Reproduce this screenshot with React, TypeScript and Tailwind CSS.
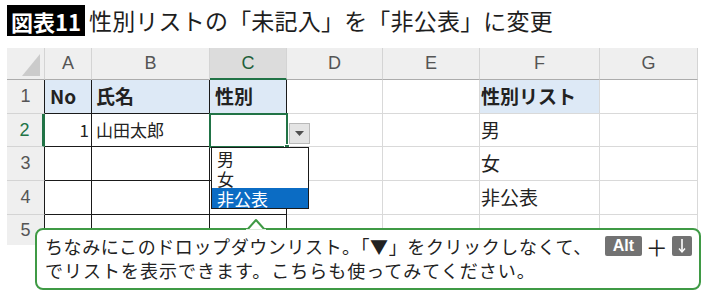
import React from "react";

const HB = "bg-[#efefef]";

function Cell({ className = "", children }: { className?: string; children?: React.ReactNode }) {
  return <div className={"flex items-center overflow-hidden whitespace-nowrap " + className}>{children}</div>;
}

export default function App() {
  const colLetters = ["A", "B", "C", "D", "E", "F", "G"];
  return (
    <div className="relative w-[710px] h-[296px] bg-white overflow-hidden font-['Noto_Sans','Noto_Sans_CJK_JP',sans-serif] text-[#222]">
      {/* Title */}
      <div className="flex items-center h-[31px] mt-[5px] ml-[7px]">
        <div className="bg-black text-white font-bold text-[22px] h-[31px] px-[4px] flex items-center leading-none font-['Noto_Sans_CJK_JP',sans-serif]">
          図表11
        </div>
        <div className="ml-[4px] text-[23px] font-normal tracking-[0.2px] leading-none text-[#1e1e1e] font-['Noto_Sans_CJK_JP',sans-serif]">
          性別リストの「未記入」を「非公表」に変更
        </div>
      </div>

      {/* Spreadsheet */}
      <div className="mt-[12px] ml-[7px] grid grid-cols-[38px_47px_118px_77px_96px_97px_120px_98px] grid-rows-[32px_34px_33px_34px_34px_30px] w-[691px]">
        {/* header row */}
        <Cell className={HB + " relative border-r border-b border-r-[#d4d4d4] border-b-[#acacac]"}>
          <svg className="absolute right-[4px] bottom-[3px]" width="18" height="22" viewBox="0 0 18 22">
            <polygon points="18,0 18,22 0,22" fill="#cbcbcb" />
          </svg>
        </Cell>
        {colLetters.map((l) =>
          l === "C" ? (
            <Cell key={l} className="bg-[#dcdcdc] justify-center border-r border-b-2 border-r-[#d4d4d4] border-b-[#217346] text-[18px] text-[#1f5f3a] font-['Liberation_Sans',sans-serif]">
              {l}
            </Cell>
          ) : (
            <Cell key={l} className={HB + " justify-center border-r border-b border-r-[#d4d4d4] border-b-[#acacac] text-[18px] text-[#555] font-['Liberation_Sans',sans-serif]"}>
              {l}
            </Cell>
          )
        )}

        {/* row 1 */}
        <Cell className={HB + " justify-center border-r border-b border-r-[#1a1a1a] border-b-[#d4d4d4] text-[18px] text-[#555] font-['Liberation_Sans',sans-serif]"}>1</Cell>
        <Cell className="bg-[#dde9f6] border-r border-b border-[#1a1a1a] pl-[5px] text-[19px] font-bold font-['Noto_Sans_CJK_JP',sans-serif]">No</Cell>
        <Cell className="bg-[#dde9f6] border-r border-b border-[#1a1a1a] pl-[4px] text-[19px] font-bold font-['Noto_Sans_CJK_JP',sans-serif]">氏名</Cell>
        <Cell className="bg-[#dde9f6] border-r border-b border-[#1a1a1a] pl-[5px] text-[19px] font-bold font-['Noto_Sans_CJK_JP',sans-serif]">性別</Cell>
        <Cell className="border-r border-b border-[#d9d9d9]" />
        <Cell className="border-r border-b border-[#d9d9d9]" />
        <Cell className="bg-[#dde9f6] border-r border-b border-[#d9d9d9] pl-[1px] text-[19px] font-bold font-['Noto_Sans_CJK_JP',sans-serif]">性別リスト</Cell>
        <Cell className="border-r border-b border-[#d9d9d9]" />

        {/* row 2 */}
        <Cell className={HB + " justify-center border-r-[3px] border-b border-r-[#217346] border-b-[#d4d4d4] text-[18px] text-[#217346] font-['Liberation_Sans',sans-serif]"}>2</Cell>
        <Cell className="justify-end border-r border-b border-[#1a1a1a] pr-[2px] text-[17px] font-['Noto_Sans_CJK_JP',sans-serif]">1</Cell>
        <Cell className="border-r border-b border-[#1a1a1a] pl-[4px] text-[17px] font-['Noto_Sans_CJK_JP',sans-serif]">山田太郎</Cell>
        <Cell className="border-r border-b border-[#1a1a1a]" />
        <Cell className="border-r border-b border-[#d9d9d9]" />
        <Cell className="border-r border-b border-[#d9d9d9]" />
        <Cell className="border-r border-b border-[#d9d9d9] pl-[1px] text-[19px] font-['Noto_Sans_CJK_JP',sans-serif]">男</Cell>
        <Cell className="border-r border-b border-[#d9d9d9]" />

        {/* row 3 */}
        <Cell className={HB + " justify-center border-r border-b border-r-[#1a1a1a] border-b-[#d4d4d4] text-[18px] text-[#555] font-['Liberation_Sans',sans-serif]"}>3</Cell>
        <Cell className="border-r border-b border-[#1a1a1a]" />
        <Cell className="border-r border-b border-[#1a1a1a]" />
        <Cell className="border-r border-b border-[#1a1a1a]" />
        <Cell className="border-r border-b border-[#d9d9d9]" />
        <Cell className="border-r border-b border-[#d9d9d9]" />
        <Cell className="border-r border-b border-[#d9d9d9] pl-[1px] text-[19px] font-['Noto_Sans_CJK_JP',sans-serif]">女</Cell>
        <Cell className="border-r border-b border-[#d9d9d9]" />

        {/* row 4 */}
        <Cell className={HB + " justify-center border-r border-b border-r-[#1a1a1a] border-b-[#d4d4d4] text-[18px] text-[#555] font-['Liberation_Sans',sans-serif]"}>4</Cell>
        <Cell className="border-r border-b border-[#1a1a1a]" />
        <Cell className="border-r border-b border-[#1a1a1a]" />
        <Cell className="border-r border-b border-[#1a1a1a]" />
        <Cell className="border-r border-b border-[#d9d9d9]" />
        <Cell className="border-r border-b border-[#d9d9d9]" />
        <Cell className="border-r border-b border-[#d9d9d9] pl-[1px] text-[19px] font-['Noto_Sans_CJK_JP',sans-serif]">非公表</Cell>
        <Cell className="border-r border-b border-[#d9d9d9]" />

        {/* row 5 */}
        <Cell className={HB + " justify-center items-start pt-[2px] border-r border-r-[#1a1a1a] text-[18px] text-[#555] font-['Liberation_Sans',sans-serif]"}>5</Cell>
        <Cell className="border-r border-[#1a1a1a]" />
        <Cell className="border-r border-[#1a1a1a]" />
        <Cell className="border-r border-[#1a1a1a]" />
        <Cell className="border-r border-[#d9d9d9]" />
        <Cell className="border-r border-[#d9d9d9]" />
        <Cell className="border-r border-[#d9d9d9]" />
        <Cell className="border-r border-[#d9d9d9]" />
      </div>

      {/* Selected cell C2 */}
      <div className="absolute left-[209px] top-[113px] w-[79px] h-[35px] border-2 border-[#217346]" />
      <div className="absolute left-[284px] top-[144px] w-[6px] h-[6px] bg-[#217346] border border-white" />

      {/* Dropdown button */}
      <div className="absolute left-[289px] top-[123px] w-[21px] h-[21px] bg-[#e4e4e4] border border-[#b9b9b9] flex items-center justify-center">
        <svg width="9" height="5" viewBox="0 0 9 5">
          <polygon points="0,0 9,0 4.5,5" fill="#505050" />
        </svg>
      </div>

      {/* Dropdown list */}
      <div className="absolute left-[211px] top-[147px] w-[98px] h-[62px] bg-white border border-[#1a1a1a] flex flex-col text-[17px] leading-none font-['Noto_Sans_CJK_JP',sans-serif]">
        <div className="h-[20px] pl-[5px] flex items-center"><span className="leading-none">男</span></div>
        <div className="h-[20px] pl-[5px] flex items-center"><span className="leading-none">女</span></div>
        <div className="h-[20px] pl-[5px] flex items-center bg-[#0b6cc4] text-white"><span className="leading-none">非公表</span></div>
      </div>

      {/* Callout */}
      <div className="absolute left-[35px] top-[228px] w-[666px] h-[62px] bg-white border-2 border-[#3f9a45] rounded-[8px] pl-[8px] pt-[4px] text-[18px] leading-[24px] text-[#222] font-['Noto_Sans_CJK_JP',sans-serif]">
        <div className="flex items-center whitespace-nowrap">
          <span className="tracking-[0.6px]">ちなみにこのドロップダウンリスト。「▼」をクリックしなくて、</span>
          <span className="ml-[13px] inline-flex items-center justify-center w-[37px] h-[20px] rounded-[2px] bg-[#727272] text-white font-bold text-[16px] tracking-normal font-['Liberation_Sans',sans-serif]">
            Alt
          </span>
          <span className="mx-[4px] text-[22px] leading-[20px] font-['Noto_Sans_CJK_JP',sans-serif]">＋</span>
          <span className="inline-flex items-center justify-center w-[20px] h-[20px] rounded-[2px] bg-[#727272]">
            <svg width="10" height="16" viewBox="0 0 10 16">
              <line x1="5" y1="1" x2="5" y2="14" stroke="white" strokeWidth="1.6" />
              <polyline points="2,10.5 5,14 8,10.5" fill="none" stroke="white" strokeWidth="1.4" />
            </svg>
          </span>
        </div>
        <div className="whitespace-nowrap tracking-[1px]">でリストを表示できます。こちらも使ってみてください。</div>
      </div>
      {/* Callout pointer */}
      <svg className="absolute left-[246px] top-[218px]" width="20" height="13" viewBox="0 0 20 13">
        <polygon points="1,12 10,2 19,12" fill="white" stroke="#3f9a45" strokeWidth="2" strokeLinejoin="round" />
        <rect x="0" y="11.2" width="20" height="2" fill="white" />
      </svg>
    </div>
  );
}
